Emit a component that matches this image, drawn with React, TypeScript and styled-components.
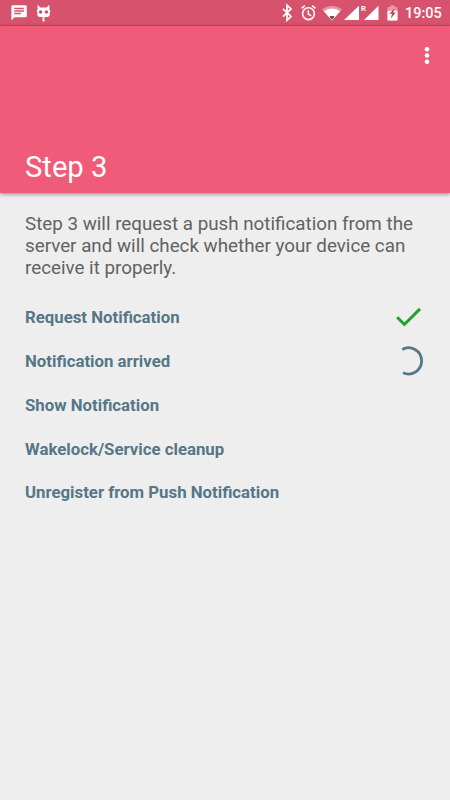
import React from 'react';
import styled, { createGlobalStyle } from 'styled-components';

const GlobalStyle = createGlobalStyle`
  * { box-sizing: border-box; }
  body { margin: 0; background: #eeeeee; font-family: Roboto, sans-serif; }
`;

const Screen = styled.div`
  width: 450px;
  height: 800px;
  display: flex;
  flex-direction: column;
  overflow: hidden;
  background: #eeeeee;
`;

const StatusBar = styled.div`
  height: 26px;
  flex: none;
  display: flex;
  justify-content: space-between;
  background: #d7526c;
  border-bottom: 1px solid #cb4b65;
`;

const StatusGroup = styled.div`
  display: flex;
  height: 25px;
`;

const StatusIcon = styled.svg<{ $gap?: number }>`
  display: block;
  flex: none;
  height: 25px;
  margin-left: ${({ $gap = 0 }) => $gap}px;
  fill: #ffffff;
`;

const RoamingLabel = styled.span`
  width: 6px;
  margin: 5px 0 0 2px;
  font-size: 7.5px;
  line-height: 8px;
  font-weight: 700;
  color: #ffffff;
`;

const Clock = styled.span`
  width: 45px;
  margin-left: 7px;
  padding-top: 1px;
  font-size: 14.5px;
  line-height: 26px;
  font-weight: 500;
  color: #ffffff;
`;

const Header = styled.header`
  height: 167px;
  flex: none;
  display: flex;
  flex-direction: column;
  justify-content: space-between;
  background: #ef5b78;
  box-shadow: 0 1px 4px rgba(0, 0, 0, 0.45);
`;

const MenuButton = styled.button`
  align-self: flex-end;
  width: 46px;
  height: 60px;
  padding: 0;
  border: 0;
  background: none;
`;

const Dots = styled.svg`
  display: block;
  fill: #ffffff;
`;

const Title = styled.h1`
  margin: 0 0 8px 25px;
  font-size: 29.2px;
  line-height: 35px;
  font-weight: 400;
  color: #ffffff;
`;

const Content = styled.main`
  padding: 20px 25px 0;
`;

const Description = styled.p`
  margin: 0 0 16px;
  font-size: 18.8px;
  line-height: 22px;
  color: #626262;
`;

const StepRow = styled.div`
  height: 43.75px;
  display: flex;
  align-items: center;
  justify-content: space-between;
`;

const StepLabel = styled.span`
  padding-top: 1px;
  font-size: 16.8px;
  font-weight: 700;
  color: #557787;
`;

const StateIcon = styled.svg`
  display: block;
  flex: none;
  fill: none;
  stroke-width: 3;
`;

type StepState = 'done' | 'running' | 'waiting';

const steps: { label: string; state: StepState }[] = [
  { label: 'Request Notification', state: 'done' },
  { label: 'Notification arrived', state: 'running' },
  { label: 'Show Notification', state: 'waiting' },
  { label: 'Wakelock/Service cleanup', state: 'waiting' },
  { label: 'Unregister from Push Notification', state: 'waiting' },
];

function StepIndicator({ state }: { state: StepState }) {
  if (state === 'done') {
    return (
      <StateIcon width="30" height="30" viewBox="0 0 30 30" stroke="#20a32d">
        <path d="M2.2 15.3l7.2 7.2L25 6.9" />
      </StateIcon>
    );
  }
  if (state === 'running') {
    return (
      <StateIcon width="30" height="30" viewBox="0 0 30 30" stroke="#557787">
        <path d="M7.2 3.4A13.1 13.1 0 1 1 8 26.8" strokeWidth="2.8" />
      </StateIcon>
    );
  }
  return null;
}

export default function App() {
  return (
    <>
      <GlobalStyle />
      <Screen>
        <StatusBar>
          <StatusGroup>
            <StatusIcon $gap={11} width="16" viewBox="0 0 16 25">
              <path
                fillRule="evenodd"
                d="M1.8 5.3h12.6a1.4 1.4 0 0 1 1.4 1.4v9.2a1.4 1.4 0 0 1-1.4 1.4H3.5L.4 20.4V6.7a1.4 1.4 0 0 1 1.4-1.4zM3.3 7.8v1.4h9.6V7.8zm0 2.5v1.4h9.6v-1.4zm0 2.5v1.4h6.6v-1.4z"
              />
            </StatusIcon>
            <StatusIcon $gap={9} width="15" viewBox="0 0 15 25">
              <path d="M1.6 4.8l2.8 2.6h6.2l2.8-2.6v5l1.2 1-.9 1.4v3.2l-1.7 1.6H3.1l-1.7-1.6v-3.2L.5 10.8l1.1-1z" />
              <g fill="#d7526c">
                <circle cx="4.6" cy="12" r="1.7" />
                <circle cx="10.4" cy="12" r="1.7" />
              </g>
              <g fill="#a33a52">
                <circle cx="4.6" cy="12" r=".7" />
                <circle cx="10.4" cy="12" r=".7" />
              </g>
              <path d="M6.6 16h1.8v5.5H6.6z" />
            </StatusIcon>
          </StatusGroup>
          <StatusGroup>
            <StatusIcon width="11" viewBox="0 0 11 25">
              <path
                d="M1 8.8l8 7.7-4 3.7V5.2l4 3.7-8 7.7"
                fill="none"
                stroke="#fff"
                strokeWidth="1.7"
              />
            </StatusIcon>
            <StatusIcon $gap={7.5} width="15" viewBox="0 0 15 25">
              <circle cx="7.5" cy="13.7" r="5.9" fill="none" stroke="#fff" strokeWidth="1.6" />
              <path
                d="M.6 8.4l3.3-2.8M14.4 8.4l-3.3-2.8M7.3 10.2V14l2.9 1.8"
                fill="none"
                stroke="#fff"
                strokeWidth="1.5"
              />
            </StatusIcon>
            <StatusIcon $gap={6.5} width="20" viewBox="0 0 20 25">
              <path d="M0 9.3Q10 2.2 20 9.3L10 20.5z" opacity=".4" />
              <path d="M1.8 11.3Q10 5.8 18.2 11.3L10 20.5z" />
              <path d="M7.8 15.9h4.4v1.6L10 20l-2.2-2.5z" fill="#8b6b73" />
              <path d="M8.2 16.2h3.6L10 19.2z" fill="#664650" />
            </StatusIcon>
            <StatusIcon $gap={2} width="15" viewBox="0 0 15 25">
              <path d="M15 5.7V20H0z" />
            </StatusIcon>
            <RoamingLabel>R</RoamingLabel>
            <StatusIcon $gap={-3} width="15" viewBox="0 0 15 25">
              <path d="M14.5 5.7V20H0z" />
            </StatusIcon>
            <StatusIcon $gap={8} width="11" viewBox="0 0 11 25">
              <path
                d="M3.5 5.2h4V7h2a1 1 0 0 1 1 1v11.5a1 1 0 0 1-1 1h-8a1 1 0 0 1-1-1V8a1 1 0 0 1 1-1h2z"
                opacity=".4"
              />
              <path d="M.5 10.8h10v8.7a1 1 0 0 1-1 1h-8a1 1 0 0 1-1-1z" />
              <path d="M7.6 8.2l-5.2 5.6h2.6l-1.2 4.6 5-5.8H6.3z" fill="#c83f59" />
            </StatusIcon>
            <Clock>19:05</Clock>
          </StatusGroup>
        </StatusBar>
        <Header>
          <MenuButton aria-label="More options">
            <Dots width="46" height="60" viewBox="0 0 46 60">
              <circle cx="23" cy="23.2" r="2.3" />
              <circle cx="23" cy="29.5" r="2.3" />
              <circle cx="23" cy="35.7" r="2.3" />
            </Dots>
          </MenuButton>
          <Title>Step 3</Title>
        </Header>
        <Content>
          <Description>
            Step 3 will request a push notification from the server and will check whether your
            device can receive it properly.
          </Description>
          {steps.map(({ label, state }) => (
            <StepRow key={label}>
              <StepLabel>{label}</StepLabel>
              <StepIndicator state={state} />
            </StepRow>
          ))}
        </Content>
      </Screen>
    </>
  );
}
